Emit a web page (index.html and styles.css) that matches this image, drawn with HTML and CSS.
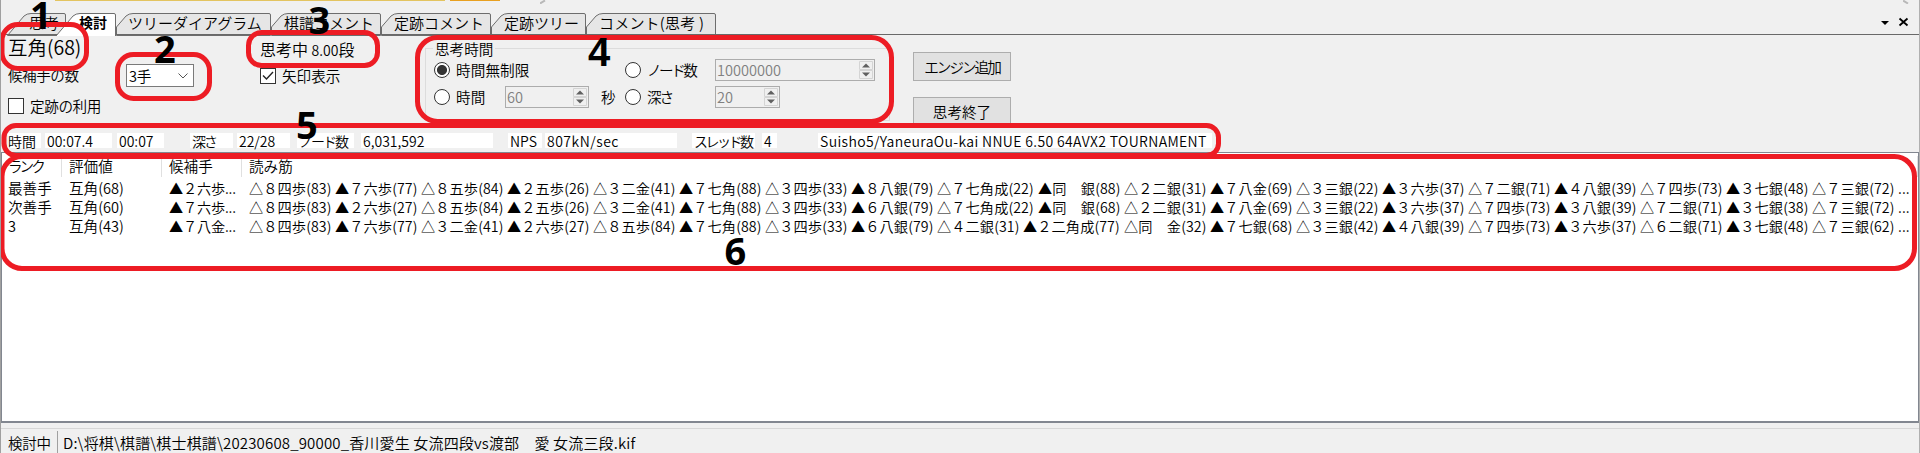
FILE: index.html
```html
<!DOCTYPE html>
<html lang="ja">
<head>
<meta charset="utf-8">
<title>検討</title>
<link rel="stylesheet" href="styles.css">
</head>
<body>
<div class="window">
  <div class="toolbar-edge"><i class="gold"></i><i class="amber"></i><svg class="tick tick-a" viewBox="0 0 6 4"><path d="M0 3.5 5 .5" /></svg><svg class="tick tick-b" viewBox="0 0 6 4"><path d="M0 .5 5 3.5" /></svg></div>
  <nav class="tabs">
    <svg class="tab-shapes" width="1920" height="26" viewBox="0 0 1920 26">
      <g class="tab-fill">
        <path d="M7.500 25.500 24 6Q27 3.500 31 3.500H64Q65.500 3.500 65.500 5V25.500Z"/>
        <path d="M116.500 25.500V17L126 6Q129 3.500 133 3.500H269Q270.500 3.500 270.500 5V25.500Z"/>
        <path d="M271.500 25.500V17L281 6Q284 3.500 288 3.500H379Q380.500 3.500 380.500 5V25.500Z"/>
        <path d="M381.500 25.500V17L391 6Q394 3.500 398 3.500H489Q490.500 3.500 490.500 5V25.500Z"/>
        <path d="M491.500 25.500V17L501 6Q504 3.500 508 3.500H584Q585.500 3.500 585.500 5V25.500Z"/>
        <path d="M586.500 25.500V17L596 6Q599 3.500 603 3.500H714Q715.500 3.500 715.500 5V25.500Z"/>
      </g>
      <path class="baseline" d="M0 24.500H1920"/>
      <path class="tab-active" d="M56 26 73 6Q76 3.500 80 3.500H114Q115.500 3.500 115.500 5V26"/>
      <path d="M1881 11h8l-4 4z"/>
      <path class="close" d="M1899.500 8.500l8 7m0-7l-8 7"/>
    </svg>
    <span class="tab t1">思考</span><b class="tab t2">検討</b><span class="tab t3">ツリーダイアグラム</span><span class="tab t4">棋譜コメント</span><span class="tab t5">定跡コメント</span><span class="tab t6">定跡ツリー</span><span class="tab t7">コメント(思考 )</span>
  </nav>
  <section class="controls">
    <div class="col-left">
      <div class="score">互角(68)</div>
      <div class="line candidates"><span class="lbl">候補手の数</span><span class="combo">3手<svg width="10" height="6" viewBox="0 0 10 6"><path d="M.5.5 5 5 9.500.5"/></svg></span></div>
      <div class="line book"><i class="check"></i><span>定跡の利用</span></div>
    </div>
    <div class="col-mid">
      <div class="thinking">思考中 <span class="dan">8.00</span>段</div>
      <div class="line"><i class="check"><svg width="14" height="14" viewBox="0 0 14 14"><path d="M2 6.500 5.500 10 12 3"/></svg></i><span>矢印表示</span></div>
    </div>
    <fieldset class="limits">
      <legend>思考時間</legend>
      <div class="limit-grid">
        <label class="radio"><i class="on"></i>時間無制限</label>
        <span></span><span></span>
        <label class="radio"><i></i><span class="node">ノード数</span></label>
        <span class="spin wide">10000000<svg width="14" height="18" viewBox="0 0 14 18"><path class="sq" d="M.5.500h13v8H.500zM.500 9.500h13v8H.500z"/><path d="M3 6.500h8L7 2.500zM3 11.500h8L7 15.500z"/></svg></span>
        <label class="radio"><i></i>時間</label>
        <span class="spin mid">60<svg width="14" height="18" viewBox="0 0 14 18"><path class="sq" d="M.5.500h13v8H.500zM.500 9.500h13v8H.500z"/><path d="M3 6.500h8L7 2.500zM3 11.500h8L7 15.500z"/></svg></span>
        <span class="sec">秒</span>
        <label class="radio"><i></i><span class="depth">深さ</span></label>
        <span class="spin small">20<svg width="14" height="18" viewBox="0 0 14 18"><path class="sq" d="M.5.500h13v8H.500zM.500 9.500h13v8H.500z"/><path d="M3 6.500h8L7 2.500zM3 11.500h8L7 15.500z"/></svg></span>
      </div>
    </fieldset>
    <div class="buttons">
      <button><span class="add">エンジン追加</span></button>
      <button>思考終了</button>
    </div>
  </section>
  <section class="info">
    <span class="f1">時間</span><span class="f2">00:07.4</span><span class="f3">00:07</span><span class="f4">深さ</span><span class="f5">22/28</span><span class="f6">ノード数</span><span class="f7">6,031,592</span><span class="f8">NPS</span><span class="f9">807kN/sec</span><span class="f10">スレッド数</span><span class="f11">4</span><span class="f12">Suisho5/YaneuraOu-kai NNUE 6.50 64AVX2 TOURNAMENT</span>
  </section>
  <section class="list">
    <div class="row head"><span class="rank kana">ランク</span><span>評価値</span><span>候補手</span><span>読み筋</span></div>
    <div class="row"><span>最善手</span><span>互角(68)</span><span>▲２六歩...</span><div class="pv"><span>△８四歩(83)</span><span>▲７六歩(77)</span><span>△８五歩(84)</span><span>▲２五歩(26)</span><span>△３二金(41)</span><span>▲７七角(88)</span><span>△３四歩(33)</span><span>▲８八銀(79)</span><span class="long">△７七角成(22)</span><span>▲同　銀(88)</span><span>△２二銀(31)</span><span>▲７八金(69)</span><span>△３三銀(22)</span><span>▲３六歩(37)</span><span>△７二銀(71)</span><span>▲４八銀(39)</span><span>△７四歩(73)</span><span>▲３七銀(48)</span><span>△７三銀(72)</span><span class="more">...</span></div></div>
    <div class="row"><span>次善手</span><span>互角(60)</span><span>▲７六歩...</span><div class="pv"><span>△８四歩(83)</span><span>▲２六歩(27)</span><span>△８五歩(84)</span><span>▲２五歩(26)</span><span>△３二金(41)</span><span>▲７七角(88)</span><span>△３四歩(33)</span><span>▲６八銀(79)</span><span class="long">△７七角成(22)</span><span>▲同　銀(68)</span><span>△２二銀(31)</span><span>▲７八金(69)</span><span>△３三銀(22)</span><span>▲３六歩(37)</span><span>△７四歩(73)</span><span>▲３八銀(39)</span><span>△７二銀(71)</span><span>▲３七銀(38)</span><span>△７三銀(72)</span><span class="more">...</span></div></div>
    <div class="row"><span>3</span><span>互角(43)</span><span>▲７八金...</span><div class="pv"><span>△８四歩(83)</span><span>▲７六歩(77)</span><span>△３二金(41)</span><span>▲２六歩(27)</span><span>△８五歩(84)</span><span>▲７七角(88)</span><span>△３四歩(33)</span><span>▲６八銀(79)</span><span>△４二銀(31)</span><span class="long">▲２二角成(77)</span><span>△同　金(32)</span><span>▲７七銀(68)</span><span>△３三銀(42)</span><span>▲４八銀(39)</span><span>△７四歩(73)</span><span>▲３六歩(37)</span><span>△６二銀(71)</span><span>▲３七銀(48)</span><span>△７三銀(62)</span><span class="more">...</span></div></div>
  </section>
  <footer class="status"><span class="state">検討中</span><span class="path">D:\将棋\棋譜\棋士棋譜\20230608_90000_香川愛生 女流四段vs渡部　愛 女流三段.kif</span></footer>
  <svg class="marks" width="1920" height="453" viewBox="0 0 1920 453">
    <g class="rings">
      <rect x="2" y="24.500" width="84.500" height="44" rx="16"/>
      <rect x="117.500" y="54.500" width="92" height="44" rx="16"/>
      <rect x="248.500" y="32.500" width="129" height="33" rx="13"/>
      <rect x="417.500" y="37.500" width="474" height="84" rx="20"/>
      <rect x="4" y="125.500" width="1214.500" height="30" rx="12"/>
      <rect x="2" y="156.500" width="1912.500" height="112" rx="20"/>
    </g>
    <g class="nums">
      <text x="30" y="28.500">1</text><text x="154" y="63">2</text><text x="308.500" y="34">3</text><text class="four" x="588" y="66">4</text><text x="296" y="138.500">5</text><text x="724.500" y="264.500">6</text>
    </g>
  </svg>
</div>
</body>
</html>
```
FILE: styles.css
```css
* { box-sizing: border-box; }
body { margin: 0; background: #f0f0f0; color: #000; font: 14.6px/19px "Noto Sans CJK JP", sans-serif; font-weight: 350; }
.window { position: relative; width: 1920px; height: 453px; overflow: hidden; display: flex; flex-direction: column; white-space: nowrap; border-left: 1px solid #a0a0a0; border-right: 1px solid #b0b0b0; }
.toolbar-edge { height: 11px; display: flex; margin: 0 -1px; background: #f0f0f0; align-items: flex-start; }
.gold { width: 390px; height: 1px; margin-left: 55px; background: #e3c460; }
.amber { width: 50px; height: 1px; margin-left: 5px; background: #e8a020; }
.tick { width: 6px; height: 4px; fill: none; stroke: #b8b8b8; stroke-width: 2; }
.tick-a { margin-left: 40px; }
.tick-b { margin-left: 1357px; }
.tabs { position: relative; height: 25px; margin: 0 -1px; display: flex; flex: none; font-size: 15px; line-height: 25px; padding-left: 29px; }
.tab-shapes { position: absolute; left: 0; top: 0; }
.tab-fill { fill: #e6e6e6; stroke: #6d6d6d; }
.baseline { stroke: #696969; }
.tab-active { fill: #fff; stroke: #6d6d6d; }
.close { fill: none; stroke: #000; stroke-width: 1.8; }
.tab { position: relative; flex: none; }
.t1 { width: 50px; } .t2 { width: 49px; font-size: 14px; font-weight: 700; } .t3 { width: 156px; } .t4 { width: 110px; } .t5 { width: 110px; } .t6 { width: 95px; }
.t7 { letter-spacing: .2px; }
.controls { display: flex; height: 98px; flex: none; padding-left: 7px; }
.line { display: flex; align-items: center; }
.col-left { width: 252px; }
.score { font-size: 19.5px; line-height: 23px; height: 28px; }
.candidates { height: 24px; line-height: 17px; }
.candidates .lbl { width: 118px; padding-bottom: 2px; letter-spacing: -.5px; }
.combo { width: 68px; height: 23px; background: #fff; border: 1px solid #7a7a7a; padding: 0 5px 0 2px; display: flex; justify-content: space-between; align-items: center; letter-spacing: -.3px; }
.combo svg { fill: none; stroke: #555; margin-top: 1px; }
.check { width: 16px; height: 16px; border: 1px solid #333; background: #fff; margin-right: 6px; display: block; flex: none; }
.check svg { display: block; fill: none; stroke: #222; stroke-width: 1.4; }
.book { margin-top: 10px; height: 17px; letter-spacing: -.4px; }
.line > .check + span { padding-bottom: 1px; }
.col-mid { width: 165px; padding-top: 2px; }
.thinking { height: 28px; line-height: 25px; font-size: 16px; word-spacing: 0; }
.dan { font-size: 14px; }
.col-mid .line { height: 22px; }
.limits { width: 465px; height: 83px; margin: 3px 0 0; border: 1px solid #dcdcdc; padding: 0 0 0 8px; flex: none; }
.limits legend { height: 20px; padding: 0 2px; margin-left: -1px; line-height: 21px; }
.limit-grid { display: grid; grid-template-columns: 71px 96px 24px 90px 160px; grid-template-rows: 23px 23px; row-gap: 4px; align-items: center; margin-top: 0; }
.radio { display: flex; align-items: center; letter-spacing: .1px; }
.radio i { width: 16px; height: 16px; border-radius: 50%; border: 1px solid #333; background: #fff; margin-right: 6px; flex: none; }
.radio i.on { background: radial-gradient(circle, #333 4.600px, #fff 5.400px); }
.node { letter-spacing: -2.5px; } .depth { letter-spacing: -2px; }
.spin { height: 22px; border: 1px solid #acacac; display: flex; justify-content: space-between; align-items: center; color: #808080; padding: 0 1px; }
.spin svg { fill: #606060; } .spin .sq { fill: #f0f0f0; stroke: #d4d4d4; }
.mid { width: 84px; } .small { width: 65px; } .wide { width: 160px; }
.buttons { margin-left: 23px; padding-top: 17px; display: flex; flex-direction: column; gap: 16px; }
button { width: 98px; height: 29px; flex: none; padding: 0 0 1px; font: inherit; border: 1px solid #adadad; background: #e1e1e1; }
.add { letter-spacing: -2px; }
.info { display: flex; height: 19px; padding-left: 7px; flex: none; align-items: flex-start; background: #f0f0f0; }
.info span { background: #fff; height: 15px; line-height: 16px; flex: none; font-size: 14px; }
.f1 { width: 33px; margin-right: 4px; } .f2 { width: 67px; margin-right: 5px; } .f3 { width: 47px; margin-right: 26px; }
.f4 { width: 43px; margin-right: 4px; letter-spacing: -2px; } .f5 { width: 53px; margin-right: 7px; } .f6 { width: 57px; margin-right: 7px; letter-spacing: -2px; }
.f7 { width: 132px; margin-right: 15px; } .f8 { width: 34px; margin-right: 3px; } .f9 { width: 132px; margin-right: 15px; letter-spacing: .5px; }
.f10 { width: 63px; margin-right: 7px; letter-spacing: -2.500px; } .f11 { width: 15px; margin-right: 41px; } .f12 { width: 394px; letter-spacing: .36px; }
.info .f4, .info .f6, .info .f10, .info .f2, .info .f3, .info .f5, .info .f7, .info .f8, .info .f9, .info .f11, .info .f12 { padding-left: 2px; }
.list { height: 271px; flex: none; background: #fff; border: 1px solid #828790; border-bottom-width: 2px; padding-top: 3px; }
.row { display: grid; grid-template-columns: 60px 100px 80px 1fr; height: 19px; line-height: 20px; }
.row > span { padding-left: 7px; height: 19px; }
.row > .pv { padding-left: 7px; }
.head { height: 22px; }
.head > span { height: 21px; border-right: 1px solid #e0e0e0; line-height: 19px; }
.row > .kana { letter-spacing: -3px; }
.row > span:first-child { padding-left: 6px; }
.row:not(.head) > span:nth-child(3) { font-size: 14.200px; letter-spacing: -.2px; }
.pv { display: flex; font-size: 14.200px; letter-spacing: .1px; }
.pv span { width: 86px; flex: none; }
.pv .long { width: 101px; }
.pv .more { width: 20px; }
.status { display: flex; height: 25px; margin: 5px -1px 0; border-top: 1px solid #d7d7d7; padding: 2px 0 0 8px; flex: none; line-height: 24px; font-size: 15px; }
.state { width: 50px; border-right: 1px solid #a0a0a0; font-size: 14.500px; letter-spacing: -.2px; flex: none; }
.path { padding-left: 5px; letter-spacing: .16px; }
.marks { position: absolute; left: -1px; top: 0; pointer-events: none; }
.rings { fill: none; stroke: #ed1c24; stroke-width: 5; }
.nums { font: 700 38px "Noto Sans", sans-serif; }
.four { font-family: "Liberation Sans", sans-serif; font-size: 40px; }
```
